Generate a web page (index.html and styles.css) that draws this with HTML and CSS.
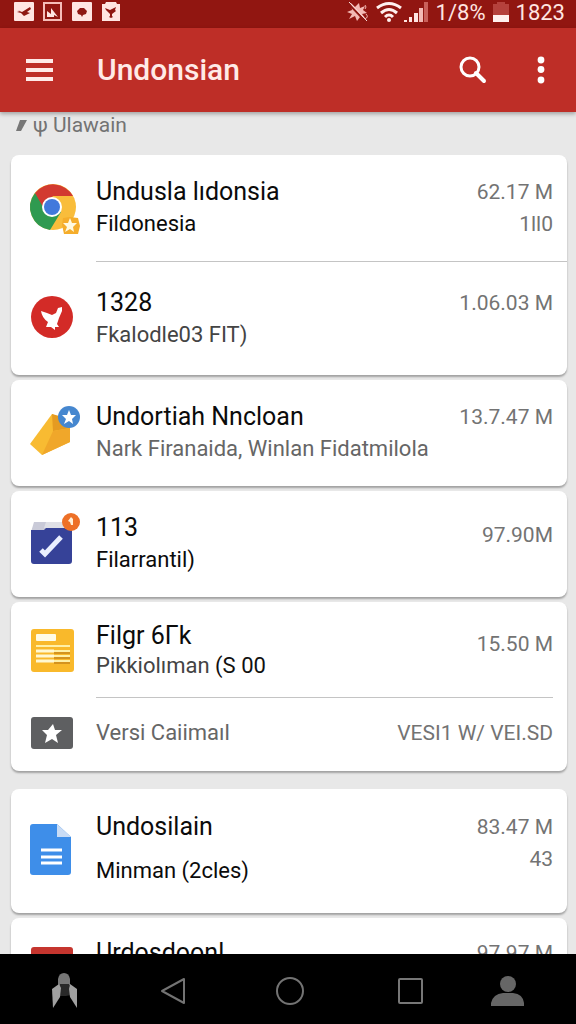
FILE: index.html
```html
<!doctype html>
<html lang="id">
    <head>
        <meta charset="UTF-8" />
        <meta name="viewport" content="width=device-width, initial-scale=1.0" />
        <title>Undonsian</title>
        <link rel="stylesheet" href="styles.css">
    </head>
    <body>
        <div class="status-bar">
            <div class="status-group">
                <svg class="status-icon" viewBox="0 0 20 20">
                    <rect width="20" height="19" rx="1" fill="#ffe5e2" />
                    <path d="M3 8l5 2 8-5 1 2-4 3 3 1-6 3-3-3-4-1 3-1z" fill="#8e1712" />
                </svg>
                <svg class="status-icon" viewBox="0 0 20 20">
                    <rect x="1" y="1" width="17" height="17" fill="none" stroke="#f6bdb8" stroke-width="2" />
                    <path d="M4 15V9l4 3V6l7 9-4-2v2z" fill="#ffe5e2" />
                </svg>
                <svg class="status-icon" viewBox="0 0 20 20">
                    <rect width="20" height="19" rx="1" fill="#ffe5e2" />
                    <path d="M5 9l3-3h4l3 3-1 3-3 1-1 2-1-2-3-1z" fill="#8e1712" />
                </svg>
                <svg class="status-icon" viewBox="0 0 20 20">
                    <path d="M1 2l3 0 1-2h10l1 2h3v17H1z" fill="#ffe5e2" />
                    <path d="M4 6l5 2 6-3-1 3 1 1-4 3v2l1 1-2 1-2-1 1-1v-2l-4-4z" fill="#8e1712" />
                </svg>
            </div>
            <div class="status-group status-right">
                <svg width="24" height="24" viewBox="0 0 24 24">
                    <path d="M6 3l4 4 4-4 1 5 5-2-2 4 4 3-5 1 3 4-5-1-3 4-2-5-6 3 3-5-5-2 5-2z" fill="#f3b9b4" />
                    <path d="M2 2l19 20" stroke="#8e1712" stroke-width="2" />
                    <path d="M4 2l18 19" stroke="#ffe5e2" stroke-width="1" />
                    <path d="M20 5q2 2 0 4M21 14q3 3-1 5" fill="none" stroke="#f3b9b4" />
                </svg>
                <svg width="26" height="22" viewBox="0 0 26 22">
                    <g fill="none" stroke="#fff0ee" stroke-width="3">
                        <path d="M1 7q12-9 24 0" />
                        <path d="M5 12q8-7 16 0" />
                        <path d="M9 16q4-4 8 0" />
                    </g>
                    <circle cx="13" cy="19" r="2" fill="#fff0ee" />
                </svg>
                <svg width="26" height="22" viewBox="0 0 26 22">
                    <path d="M1 19h3v2H1zM6 16h3v5H6zM11 12h4v9h-4z" fill="#ffe5e2" />
                    <path d="M16 7h4v14h-4z" fill="#f3b9b4" />
                    <path d="M21 1h4v20h-4z" fill="#c9605a" />
                </svg>
                <span class="status-text">1/8%</span>
                <svg width="16" height="22" viewBox="0 0 16 22">
                    <path d="M4 1h8v2h4v12H0V3h4z" fill="#b5413c" />
                    <path d="M0 14h16v7H0z" fill="#fff0ee" />
                </svg>
                <span class="status-text">1823</span>
            </div>
        </div>

        <header class="toolbar">
            <button class="icon-button" aria-label="Menu">
                <svg width="28" height="24" viewBox="0 0 28 24">
                    <path d="M1 3h27M1 12h27M1 21h27" stroke="#ffeae7" stroke-width="4" />
                </svg>
            </button>
            <h1 class="toolbar-title">Undonsian</h1>
            <button class="icon-button" aria-label="Cari">
                <svg width="28" height="28" viewBox="0 0 28 28" fill="none" stroke="#fff" stroke-width="3">
                    <circle cx="11" cy="11" r="9" />
                    <path d="M17 17l8 8" stroke-width="4" stroke-linecap="round" />
                </svg>
            </button>
            <button class="icon-button" aria-label="Lainnya">
                <svg width="8" height="28" viewBox="0 0 8 28" fill="#fff">
                    <circle cx="4" cy="4" r="3.4" />
                    <circle cx="4" cy="13.5" r="3.4" />
                    <circle cx="4" cy="24" r="3.4" />
                </svg>
            </button>
        </header>

        <main class="content">
            <h2 class="section-title">
                <svg width="11" height="14" viewBox="0 0 11 14">
                    <path d="M4 2h7L5 13H0z" fill="#777" />
                </svg>
                ψ Ulawain
            </h2>

            <section class="card">
                <div class="row">
                    <svg class="app-icon" viewBox="0 0 52 52">
                        <circle cx="23" cy="25" r="23" fill="#f9bd3b" />
                        <path d="M23 25L5 11A23 23 0 0 0 20 48L31 30z" fill="#2f9a50" />
                        <path d="M5 11A23 23 0 0 1 43 14H23L13 25z" fill="#d23a30" />
                        <circle cx="22" cy="25" r="10" fill="#fff" />
                        <circle cx="22" cy="25" r="8" fill="#4179dc" />
                        <path d="M33 36l7-1 8 1 2 8-2 8-14 0-2-9z" fill="#f5ad2b" />
                        <path d="M40 36l2 5 5 0-4 4 1 5-4-3-5 3 2-5-4-4h5z" fill="#fff9e0" />
                    </svg>
                    <div class="row-text">
                        <h3 class="title">Undusla lıdonsia</h3>
                        <p class="subtitle">Fildonesia</p>
                    </div>
                    <div class="amount">62.17 M<br>1ll0</div>
                </div>
                <div class="row row-tall divided">
                    <svg class="app-icon" viewBox="0 0 52 52">
                        <circle cx="22" cy="24" r="21" fill="#d32b27" />
                        <path d="M11 18l6 2 5 2 4-2 2-5 4-1 0 4-3 7-2 6 2 3-4 0 0 3-4-3-5 0 2-5q-6-4-7-11z" fill="#fff" />
                    </svg>
                    <div class="row-text">
                        <h3 class="title">1328</h3>
                        <p class="subtitle subtitle-dark">Fkalodle03 FIT)</p>
                    </div>
                    <div class="amount">1.06.03 M</div>
                </div>
            </section>

            <section class="card">
                <div class="row">
                    <svg class="app-icon" viewBox="0 0 52 52">
                        <path d="M22 7L0 37l12 11 28-13V15z" fill="#f8bb32" />
                        <path d="M22 7l1 17 17-3V12z" fill="#e59b22" />
                        <path d="M23 24l17-3v14L12 48z" fill="#f0a72a" />
                        <circle cx="39" cy="10" r="11" fill="#4687cf" />
                        <path d="M39 3l2 5 5 0-4 4 1 5-4-3-5 3 2-5-4-4h5z" fill="#fff" />
                    </svg>
                    <div class="row-text">
                        <h3 class="title">Undortiah Nncloan</h3>
                        <p class="subtitle subtitle-muted">Nark Firanaida, Winlan Fidatmilola</p>
                    </div>
                    <div class="amount">13.7.47 M</div>
                </div>
            </section>

            <section class="card">
                <div class="row">
                    <svg class="app-icon" viewBox="0 0 52 52">
                        <path d="M4 4h36l2 10H1z" fill="#c9cad8" />
                        <path d="M16 4h24v6H14z" fill="#dfe0e6" />
                        <path d="M1 12h13l2-2h26v33q0 3-3 3H4q-3 0-3-3z" fill="#364298" />
                        <path d="M11 32l4 4 16-17" fill="none" stroke="#e9efff" stroke-width="5" />
                        <circle cx="41" cy="4" r="9" fill="#ed7027" />
                        <path d="M38 3l3-4 2 2v6l-2 0-1-3z" fill="#fff0d8" />
                    </svg>
                    <div class="row-text">
                        <h3 class="title">113</h3>
                        <p class="subtitle">Filarrantil)</p>
                    </div>
                    <div class="amount amount-low">97.90M</div>
                </div>
            </section>

            <section class="card">
                <div class="row row-dense">
                    <svg class="app-icon" viewBox="0 0 52 52">
                        <rect x="1" y="4" width="43" height="43" rx="3" fill="#f9b92b" />
                        <rect x="6" y="9" width="20" height="7" rx="1" fill="#fffbe6" />
                        <path d="M6 21h34M6 26h34M6 31h34M6 36h34" stroke="#fff0a6" stroke-width="2" />
                        <path d="M24 28h16M24 33h16M24 38h16" stroke="#d4931f" stroke-width="2" />
                        <path d="M6 26h18M6 31h18M6 36h18" stroke="#fff8d2" stroke-width="3" />
                    </svg>
                    <div class="row-text">
                        <h3 class="title">Filgr 6Γk</h3>
                        <p class="subtitle subtitle-dark">Pikkiolıman <b>(S 00</b></p>
                    </div>
                    <div class="amount amount-low">15.50 M</div>
                </div>
                <div class="row row-single divided divided-inset">
                    <svg class="app-icon app-icon-flat" viewBox="0 0 52 32">
                        <rect x="1" width="42" height="32" rx="3" fill="#5e5f61" />
                        <path d="M23 7l2 6 7 0-6 5 2 8-6-4-7 4 2-8-5-5 6 0z" fill="#fff" />
                    </svg>
                    <p class="subtitle subtitle-muted">Versi Caiimaıl</p>
                    <div class="amount">VESI1 W/ VEI.SD</div>
                </div>
            </section>

            <section class="card card-spaced">
                <div class="row row-loose">
                    <svg class="app-icon" viewBox="0 0 52 52">
                        <path d="M4 1h23l14 13v35q0 3-3 3H3q-3 0-3-3V4q0-3 3-3z" fill="#3e8ee9" />
                        <path d="M27 1l14 13H27z" fill="#c9dcf5" />
                        <path d="M11 27h21M11 34h21M11 40h21" stroke="#fff" stroke-width="3" />
                    </svg>
                    <div class="row-text">
                        <h3 class="title">Undosilain</h3>
                        <p class="subtitle">Minman (2cles)</p>
                    </div>
                    <div class="amount">83.47 M<br>43</div>
                </div>
            </section>

            <section class="card">
                <div class="row row-partial">
                    <svg class="app-icon" viewBox="0 0 52 52">
                        <rect x="1" y="10" width="42" height="42" rx="3" fill="#c5352e" />
                    </svg>
                    <h3 class="title">Urdosdoonl</h3>
                    <div class="amount">97.97 M</div>
                </div>
            </section>
        </main>

        <nav class="nav-bar">
            <button class="nav-button" aria-label="Asisten">
                <svg width="30" height="38" viewBox="0 0 30 38">
                    <path d="M8 12V7q1-6 6-6t6 6v6l-3 2h-7z" fill="#777" />
                    <path d="M10 12h9l2 11-5 1h-6l-2-4z" fill="#292929" />
                    <path d="M2 17l7-5 2 4-1 9-7 11z" fill="#a0a0a0" />
                    <path d="M20 12l7 5 0 19-7-11-1-8z" fill="#a0a0a0" />
                </svg>
            </button>
            <button class="nav-button" aria-label="Kembali">
                <svg width="28" height="30" viewBox="0 0 28 30">
                    <path d="M2 15L24 3v24z" fill="none" stroke="#737373" stroke-width="2" stroke-linejoin="round" />
                </svg>
            </button>
            <button class="nav-button" aria-label="Beranda">
                <svg width="30" height="30" viewBox="0 0 30 30">
                    <circle cx="15" cy="15" r="13" fill="none" stroke="#737373" stroke-width="2" />
                </svg>
            </button>
            <button class="nav-button" aria-label="Terkini">
                <svg width="28" height="28" viewBox="0 0 28 28">
                    <rect x="2" y="2" width="23" height="24" rx="1" fill="none" stroke="#777" stroke-width="2" />
                </svg>
            </button>
            <button class="nav-button" aria-label="Profil">
                <svg width="34" height="32" viewBox="0 0 34 32" fill="#666">
                    <circle cx="17" cy="9" r="8" />
                    <path d="M0 31v-3q2-9 12-10h10q10 1 11 10v3z" />
                </svg>
            </button>
        </nav>
    </body>
</html>
```
FILE: styles.css
```css
*,
*::before,
*::after {
    margin: 0;
    padding: 0;
    box-sizing: border-box;
}

:root {
    --primary: #be2e27;
    --primary-dark: #911611;
    --page: #e8e8e8;
    --muted: #737373;
}

body {
    height: 100vh;
    display: flex;
    flex-direction: column;
    overflow: hidden;
    font-family: Roboto, "Liberation Sans", sans-serif;
    background: var(--page);
    color: #0b0b0b;
}

svg {
    display: block;
    flex-shrink: 0;
    overflow: visible;
}

button {
    border: none;
    background: none;
    cursor: pointer;
}

/* Status bar */
.status-bar {
    flex: 0 0 28px;
    display: flex;
    align-items: center;
    justify-content: space-between;
    padding: 0 11px 4px 14px;
    background: var(--primary-dark);
}

.status-group {
    display: flex;
    align-items: center;
    gap: 9px;
}

.status-right {
    gap: 7px;
}

.status-right svg:nth-child(2) {
    margin-right: -6px;
}

.status-icon {
    width: 20px;
    height: 20px;
}

.status-text {
    padding-top: 2px;
    font-size: 22px;
    line-height: 22px;
    color: #ffe5e2;
}

/* Toolbar */
.toolbar {
    position: relative;
    z-index: 1;
    flex: 0 0 84px;
    display: flex;
    align-items: center;
    gap: 44px;
    padding: 0 25px;
    background: var(--primary);
    box-shadow: 0 2px 4px rgba(0, 0, 0, 0.3);
}

.icon-button {
    min-width: 28px;
    height: 48px;
    display: flex;
    align-items: center;
    justify-content: center;
}

.icon-button:last-child {
    min-width: 20px;
}

.toolbar-title {
    flex: 1;
    font-size: 30px;
    font-weight: 500;
    line-height: 36px;
    color: #ffeae7;
}

/* List */
.content {
    flex: 1;
    min-height: 0;
    overflow: hidden;
    display: flex;
    flex-direction: column;
    gap: 5px;
    padding: 0 9px 0 11px;
}

.section-title {
    flex-shrink: 0;
    display: flex;
    align-items: center;
    gap: 6px;
    padding: 1px 5px 13px;
    font-size: 21px;
    font-weight: 400;
    line-height: 24px;
    color: var(--muted);
}

.card {
    flex-shrink: 0;
    background: #fff;
    border-radius: 8px;
    box-shadow: 0 2px 2px rgba(0, 0, 0, 0.3);
}

.card-spaced {
    margin-top: 13px;
}

.row {
    position: relative;
    display: flex;
    align-items: center;
    padding: 21px 14px 21px 19px;
}

.row-tall {
    padding-top: 26px;
    padding-bottom: 24px;
}

.row-dense {
    padding-top: 19px;
    padding-bottom: 16px;
}

.row-single {
    padding-top: 20px;
    padding-bottom: 22px;
}

.row-loose {
    padding-top: 22px;
    padding-bottom: 26px;
}

.row-partial {
    align-items: flex-start;
    padding-top: 19px;
}

.divided::before {
    content: "";
    position: absolute;
    top: 0;
    left: 85px;
    right: 0;
    height: 1px;
    background: #c4c4c4;
}

.divided-inset::before {
    right: 14px;
}

.app-icon {
    width: 52px;
    height: 52px;
    margin-right: 14px;
}

.app-icon-flat {
    height: 32px;
}

.row-text {
    min-width: 0;
}

.title {
    font-size: 25px;
    font-weight: 400;
    line-height: 32px;
}

.subtitle {
    font-size: 22px;
    line-height: 32px;
    white-space: nowrap;
}

.subtitle b {
    font-weight: 400;
    color: #111;
}

.subtitle-dark {
    color: #444;
}

.subtitle-muted {
    color: #666;
}

.row-dense .title,
.row-dense .subtitle {
    line-height: 30px;
}

.row-loose .title {
    margin-bottom: 12px;
}

.amount {
    align-self: flex-start;
    margin-left: auto;
    font-size: 21px;
    line-height: 32px;
    text-align: right;
    white-space: nowrap;
    color: var(--muted);
}

.amount-low {
    margin-top: 7px;
}

/* System navigation */
.nav-bar {
    flex: 0 0 70px;
    display: grid;
    grid-template-columns: 108fr 110fr 122fr 120fr 74fr;
    align-items: center;
    padding: 4px 31px 0 11px;
    background: #000;
}

.nav-button {
    height: 48px;
    display: flex;
    align-items: center;
    justify-content: center;
}
```
